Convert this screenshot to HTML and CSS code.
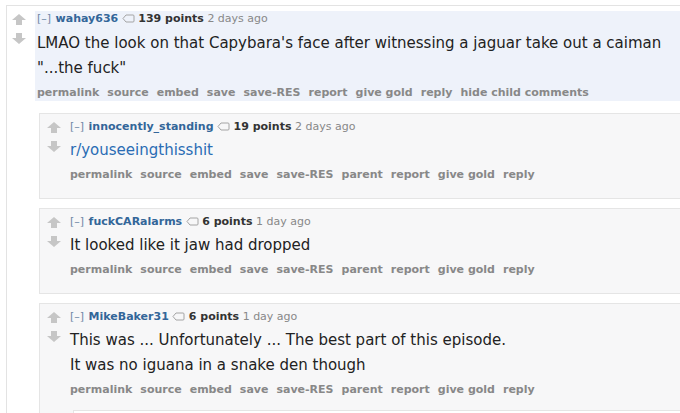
FILE: index.html
```html
<!DOCTYPE html>
<html lang="en">
<head>
    <meta charset="UTF-8">
    <meta name="viewport" content="width=device-width, initial-scale=1.0">
    <title>comments</title>
    <link rel="stylesheet" href="styles.css">
</head>
<body>
    <div class="sitetable">
        <div class="comment top">
            <div class="thing">
                <div class="midcol">
                    <svg class="arrow" width="14" height="11" viewBox="0 0 14 11"><path d="M7 0 L14 6 H10 V11 H4 V6 H0 Z"/></svg>
                    <svg class="arrow down" width="14" height="11" viewBox="0 0 14 11"><path d="M7 11 L14 5 H10 V0 H4 V5 H0 Z"/></svg>
                </div>
                <div class="entry highlight">
                    <p class="tagline">
                        <a class="expand">[–]</a>
                        <a class="author">wahay636</a>
                        <svg class="tag" width="13" height="9" viewBox="0 0 13 9"><path d="M1 4.5 L4 1 H11 Q12 1 12 2 V7 Q12 8 11 8 H4 Z"/></svg>
                        <span class="score">139 points</span>
                        <span class="time">2 days ago</span>
                    </p>
                    <div class="md">
                        <p>LMAO the look on that Capybara's face after witnessing a jaguar take out a caiman</p>
                        <p>"...the fuck"</p>
                    </div>
                    <ul class="buttons">
                        <li>permalink</li>
                        <li>source</li>
                        <li>embed</li>
                        <li>save</li>
                        <li>save-RES</li>
                        <li>report</li>
                        <li>give gold</li>
                        <li>reply</li>
                        <li>hide child comments</li>
                    </ul>
                </div>
            </div>

            <div class="child">
                <div class="comment box">
                    <div class="thing">
                        <div class="midcol">
                            <svg class="arrow" width="14" height="11" viewBox="0 0 14 11"><path d="M7 0 L14 6 H10 V11 H4 V6 H0 Z"/></svg>
                            <svg class="arrow down" width="14" height="11" viewBox="0 0 14 11"><path d="M7 11 L14 5 H10 V0 H4 V5 H0 Z"/></svg>
                        </div>
                        <div class="entry">
                            <p class="tagline">
                                <a class="expand">[–]</a>
                                <a class="author">innocently_standing</a>
                                <svg class="tag" width="13" height="9" viewBox="0 0 13 9"><path d="M1 4.5 L4 1 H11 Q12 1 12 2 V7 Q12 8 11 8 H4 Z"/></svg>
                                <span class="score">19 points</span>
                                <span class="time">2 days ago</span>
                            </p>
                            <div class="md">
                                <p><a class="link">r/youseeingthisshit</a></p>
                            </div>
                            <ul class="buttons">
                                <li>permalink</li>
                                <li>source</li>
                                <li>embed</li>
                                <li>save</li>
                                <li>save-RES</li>
                                <li>parent</li>
                                <li>report</li>
                                <li>give gold</li>
                                <li>reply</li>
                            </ul>
                        </div>
                    </div>
                </div>

                <div class="comment box">
                    <div class="thing">
                        <div class="midcol">
                            <svg class="arrow" width="14" height="11" viewBox="0 0 14 11"><path d="M7 0 L14 6 H10 V11 H4 V6 H0 Z"/></svg>
                            <svg class="arrow down" width="14" height="11" viewBox="0 0 14 11"><path d="M7 11 L14 5 H10 V0 H4 V5 H0 Z"/></svg>
                        </div>
                        <div class="entry">
                            <p class="tagline">
                                <a class="expand">[–]</a>
                                <a class="author">fuckCARalarms</a>
                                <svg class="tag" width="13" height="9" viewBox="0 0 13 9"><path d="M1 4.5 L4 1 H11 Q12 1 12 2 V7 Q12 8 11 8 H4 Z"/></svg>
                                <span class="score">6 points</span>
                                <span class="time">1 day ago</span>
                            </p>
                            <div class="md">
                                <p>It looked like it jaw had dropped</p>
                            </div>
                            <ul class="buttons">
                                <li>permalink</li>
                                <li>source</li>
                                <li>embed</li>
                                <li>save</li>
                                <li>save-RES</li>
                                <li>parent</li>
                                <li>report</li>
                                <li>give gold</li>
                                <li>reply</li>
                            </ul>
                        </div>
                    </div>
                </div>

                <div class="comment box">
                    <div class="thing">
                        <div class="midcol">
                            <svg class="arrow" width="14" height="11" viewBox="0 0 14 11"><path d="M7 0 L14 6 H10 V11 H4 V6 H0 Z"/></svg>
                            <svg class="arrow down" width="14" height="11" viewBox="0 0 14 11"><path d="M7 11 L14 5 H10 V0 H4 V5 H0 Z"/></svg>
                        </div>
                        <div class="entry">
                            <p class="tagline">
                                <a class="expand">[–]</a>
                                <a class="author">MikeBaker31</a>
                                <svg class="tag" width="13" height="9" viewBox="0 0 13 9"><path d="M1 4.5 L4 1 H11 Q12 1 12 2 V7 Q12 8 11 8 H4 Z"/></svg>
                                <span class="score">6 points</span>
                                <span class="time">1 day ago</span>
                            </p>
                            <div class="md">
                                <p>This was ... Unfortunately ... The best part of this episode.</p>
                                <p>It was no iguana in a snake den though</p>
                            </div>
                            <ul class="buttons">
                                <li>permalink</li>
                                <li>source</li>
                                <li>embed</li>
                                <li>save</li>
                                <li>save-RES</li>
                                <li>parent</li>
                                <li>report</li>
                                <li>give gold</li>
                                <li>reply</li>
                            </ul>
                        </div>
                    </div>
                    <div class="child">
                        <div class="comment box nested"></div>
                    </div>
                </div>
            </div>
        </div>
    </div>
</body>
</html>
```

FILE: styles.css
```css
body {
    margin: 0;
    background-color: #fff;
    font-family: "DejaVu Sans", Verdana, sans-serif;
    color: #222;
    overflow: hidden;
}

.sitetable {
    width: 760px;
    padding: 5px 0 0 6px;
}

.comment.top {
    border-top: 1px solid #e3e3e3;
    border-left: 1px solid #e3e3e3;
    padding-top: 5px;
}

.thing {
    display: flex;
}

.midcol {
    display: flex;
    flex-direction: column;
    align-items: flex-start;
    gap: 8px;
    width: 23px;
    padding: 3px 0 0 5px;
    flex-shrink: 0;
}

.arrow {
    fill: #c6c6c6;
}

.entry {
    flex: 1;
    padding-left: 2px;
}

.entry.highlight {
    background-color: #eef2fa;
}

.tagline {
    margin: 0;
    font-size: 11px;
    line-height: 16px;
    color: #888;
    white-space: nowrap;
}

.tagline .expand {
    color: #7088a6;
    margin-right: 1px;
}

.tagline .author {
    color: #369;
    font-weight: bold;
}

.tagline .tag {
    fill: none;
    stroke: #a4a4a4;
    stroke-width: 1;
    vertical-align: -1px;
}

.tagline .score {
    color: #333;
    font-weight: bold;
}

.md {
    padding: 6px 0 7px;
    font-size: 15px;
    line-height: 20px;
}

.md p {
    margin: 0;
}

.md p + p {
    margin-top: 5px;
}

.md .link {
    color: #2a6cb4;
}

.buttons {
    display: flex;
    gap: 8px;
    margin: 0;
    padding: 0;
    list-style: none;
    font-size: 11px;
    font-weight: bold;
    line-height: 16px;
    color: #888;
    white-space: nowrap;
}

.child {
    margin: 12px 0 0 32px;
}

.comment.box {
    background-color: #f7f7f8;
    border: 1px solid #e5e5e5;
    padding: 5px 0 15px;
    margin-bottom: 9px;
}

.box .md {
    padding: 5px 0 7px;
}

.box .midcol {
    padding-left: 7px;
}

.box .entry {
    padding-left: 0;
}

.box .child {
    margin: 12px 0 0 33px;
}

.comment.nested {
    height: 40px;
    background-color: #fff;
}
```
